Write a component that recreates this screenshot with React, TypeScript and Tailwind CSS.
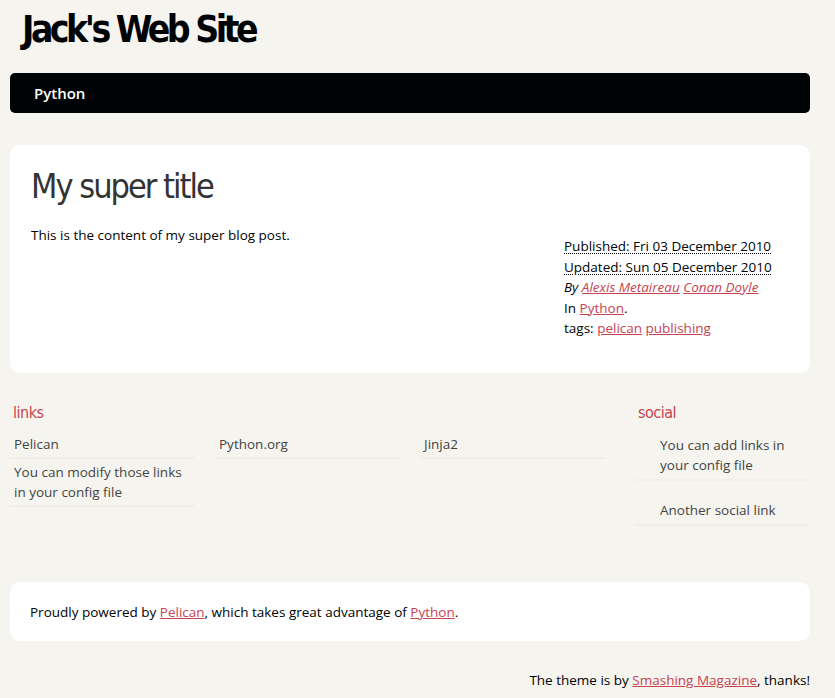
const body = { fontFamily: '"Open Sans", "DejaVu Sans", sans-serif' };
const head = { fontFamily: '"DejaVu Sans", sans-serif' };

const blogroll = [
  ['Pelican'],
  ['Python.org'],
  ['Jinja2'],
  ['You can modify those links in your config file'],
];

export default function App() {
  return (
    <div className="min-h-[698px] bg-[#f5f4ef] text-[13.5px] leading-[20px] text-[#000305]" style={body}>
      <div className="ml-[10px] w-[800px] pb-2">
        {/* site header */}
        <header className="pt-[6px]">
          <h1 className="pl-[12px] font-stretch-condensed text-[37px] font-bold leading-[48px] tracking-[-3.5px] text-[#000305]" style={head}>
            Jack's Web Site
          </h1>
          <nav className="mt-[19px] flex h-[40px] items-center rounded-[5px] bg-[#000305] px-[24px]">
            <span className="text-[15px] font-semibold text-white">Python</span>
          </nav>
        </header>

        {/* article */}
        <section className="mt-[32px] flex h-[228px] rounded-[10px] bg-white pl-[21px] pr-[20px] pt-[18px]">
          <div className="flex-1">
            <h2 className="font-stretch-condensed text-[34px] leading-[46px] tracking-[-2px] text-[#333]" style={head}>My super title</h2>
            <p className="mt-[16px]">This is the content of my super blog post.</p>
          </div>
          <footer className="mt-[73px] w-[226px] leading-[20.5px]">
            <div>
              <abbr className="underline decoration-dotted decoration-1 underline-offset-2" title="2010-12-03">
                Published: Fri 03 December 2010
              </abbr>
            </div>
            <div>
              <abbr className="underline decoration-dotted decoration-1 underline-offset-2" title="2010-12-05">
                Updated: Sun 05 December 2010
              </abbr>
            </div>
            <address className="italic">
              By <a className="text-[#c74350] underline">Alexis Metaireau</a>{' '}
              <a className="text-[#c74350] underline">Conan Doyle</a>
            </address>
            <p>
              In <a className="text-[#c74350] underline">Python</a>.
            </p>
            <p>
              tags: <a className="text-[#c74350] underline">pelican</a>{' '}
              <a className="text-[#c74350] underline">publishing</a>
            </p>
          </footer>
        </section>

        {/* extras */}
        <section className="mt-[28px] flex">
          <div className="w-[620px]">
            <h2 className="pl-[3px] font-stretch-condensed text-[16px] leading-[24px] tracking-[-0.5px] text-[#c74350]" style={head}>links</h2>
            <ul className="mt-[6px] grid grid-cols-[185px_185px_185px] gap-x-[20px] text-[#444]">
              {blogroll.map(([t]) => (
                <li key={t} className="border-b-2 border-[#f0eded] px-[4px] pb-[3px] pt-[3px]">
                  {t}
                </li>
              ))}
            </ul>
          </div>
          <div className="ml-[5px] w-[175px]">
            <h2 className="pl-[3px] font-stretch-condensed text-[16px] leading-[24px] tracking-[-0.5px] text-[#c74350]" style={head}>social</h2>
            <ul className="mt-[10px] text-[#444]">
              <li className="border-b-2 border-[#f0eded] pb-[4px] pl-[25px]">You can add links in your config file</li>
              <li className="mt-[19px] border-b-2 border-[#f0eded] pb-[4px] pl-[25px]">Another social link</li>
            </ul>
          </div>
        </section>

        {/* about */}
        <footer className="mt-[56px] flex h-[59px] items-center rounded-[10px] bg-white px-[20px]">
          <p>
            Proudly powered by <a className="text-[#c74350] underline">Pelican</a>, which takes great advantage of{' '}
            <a className="text-[#c74350] underline">Python</a>.
          </p>
        </footer>

        <p className="mt-[29px] text-right">
          The theme is by <a className="text-[#c74350] underline">Smashing Magazine</a>, thanks!
        </p>
      </div>
    </div>
  );
}
